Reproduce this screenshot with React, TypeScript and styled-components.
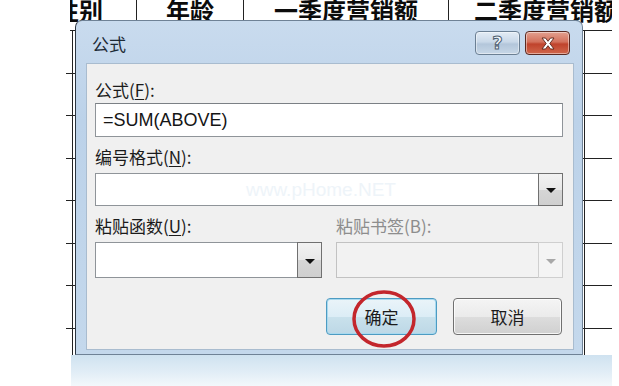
import React from 'react';
import styled, { createGlobalStyle } from 'styled-components';

const GlobalStyle = createGlobalStyle`
  html, body { margin: 0; padding: 0; background: #fff; }
  body { font-family: "Noto Sans CJK SC", "Liberation Sans", sans-serif; }
`;

const Page = styled.div`
  position: relative;
  width: 619px;
  height: 386px;
  overflow: hidden;
  background: #fff;
  display: flex;
  flex-direction: column;
`;

/* ---- the word table behind the dialog ---- */

const Sheet = styled.div`
  height: 355px;
  margin-left: 66px;
  margin-right: 7px;
  overflow: hidden;
`;

const HeadRow = styled.div`
  display: grid;
  grid-template-columns: 66px 107px 205px 1fr;
  margin-left: 4px;
  height: 31px;
  border-bottom: 1.5px solid #222;
  box-sizing: border-box;
`;

const HeadCell = styled.div<{ $first?: boolean }>`
  overflow: hidden;
  white-space: nowrap;
  font-family: "Noto Sans CJK SC", sans-serif;
  font-weight: 700;
  font-size: 24px;
  line-height: 24px;
  margin-top: -2px;
  color: #0c0c0c;
  text-align: ${p => (p.$first ? 'left' : 'center')};
  text-indent: ${p => (p.$first ? '-15px' : '0')};
  border-left: ${p => (p.$first ? 'none' : '1.5px solid #222')};
`;

const WideCell = styled(HeadCell)`
  overflow: visible;
  width: 300px;
  text-align: left;
  padding-left: 25px;
`;

const BodyRow = styled.div`
  display: grid;
  grid-template-columns: 7px 512px 1fr;
  height: 42.5px;
  border-bottom: 1.5px solid #222;
  box-sizing: border-box;
`;

const BodyCell = styled.div<{ $line?: boolean }>`
  border-right: ${p => (p.$line ? '1.5px solid #222' : 'none')};
`;

const Reflection = styled.div`
  height: 31px;
  margin-left: 71px;
  width: 541px;
  background: linear-gradient(to bottom, #cfe2f0 0%, #e1edf6 55%, #f3f8fb 100%);
`;

/* ---- the dialog ---- */

const Dialog = styled.div`
  position: absolute;
  left: 75px;
  top: 20px;
  width: 508px;
  height: 335px;
  box-sizing: border-box;
  border: 1px solid #6f8296;
  border-left-color: #2b3540;
  border-radius: 7px 7px 0 0;
  background: linear-gradient(to bottom, #c9dbee 0%, #bcd2e9 30%, #c4d8ec 100%);
  display: flex;
  flex-direction: column;
  padding: 0 8px 4px 10px;
`;

const TitleBar = styled.div`
  height: 42px;
  display: flex;
  align-items: center;
  justify-content: space-between;
  padding-left: 6px;
`;

const Title = styled.span`
  font-size: 17px;
  color: #1d2a36;
  margin-top: 2px;
`;

const CaptionButtons = styled.div`
  display: flex;
  gap: 5px;
  margin-top: 2px;
  margin-right: 4px;
`;

const CaptionButton = styled.div<{ $close?: boolean }>`
  width: 45px;
  height: 24px;
  box-sizing: border-box;
  border-radius: 4px;
  border: 1px solid ${p => (p.$close ? '#5a2a22' : '#6b7f93')};
  background: ${p =>
    p.$close
      ? 'linear-gradient(to bottom, #e2a08f 0%, #d3715c 45%, #c0432c 55%, #d0674c 100%)'
      : 'linear-gradient(to bottom, #e3ecf5 0%, #c9d8e8 45%, #b3c6da 55%, #c7d7e7 100%)'};
  box-shadow: inset 0 0 0 1px rgba(255, 255, 255, 0.45);
  display: flex;
  align-items: center;
  justify-content: center;
`;

const HelpGlyph = styled.span`
  font-family: "DejaVu Sans", sans-serif;
  font-weight: 700;
  font-size: 18px;
  line-height: 1;
  color: #f4f6f8;
  -webkit-text-stroke: 1px #4d5f71;
`;

const Panel = styled.div`
  flex: 1;
  background: #f0f0f0;
  border: 1px solid #a9bccf;
  display: flex;
  flex-direction: column;
  padding: 16px 10px 0 8px;
`;

const Label = styled.div<{ $disabled?: boolean }>`
  font-size: 17px;
  line-height: 20px;
  color: ${p => (p.$disabled ? '#8d8d8d' : '#1b1b1b')};
  white-space: nowrap;
`;

const Key = styled.span`
  text-decoration: underline;
  text-underline-offset: 2px;
`;

const TextBox = styled.div`
  margin-top: 3px;
  height: 34px;
  box-sizing: border-box;
  border: 1px solid #8f9499;
  border-top-color: #7b8085;
  background: #fff;
  display: flex;
  align-items: center;
  padding-left: 7px;
  font-family: "Liberation Sans", sans-serif;
  font-size: 18px;
  color: #151515;
`;

const Combo = styled.div<{ $h: number; $disabled?: boolean }>`
  height: ${p => p.$h}px;
  box-sizing: border-box;
  border: 1px solid ${p => (p.$disabled ? '#c2c2c2' : '#8f9499')};
  background: ${p => (p.$disabled ? '#f2f2f2' : '#fff')};
  display: flex;
  position: relative;
`;

const ComboText = styled.div`
  flex: 1;
  display: flex;
  align-items: center;
  padding-left: 150px;
  font-family: "Liberation Sans", sans-serif;
  font-size: 19px;
  color: #eef4f9;
  white-space: nowrap;
  overflow: hidden;
`;

const DropButton = styled.div<{ $disabled?: boolean }>`
  width: 25px;
  box-sizing: border-box;
  border: 1px solid ${p => (p.$disabled ? '#cfcfcf' : '#707070')};
  margin: -1px -1px -1px 0;
  background: ${p =>
    p.$disabled
      ? '#f4f4f4'
      : 'linear-gradient(to bottom, #f2f2f2 0%, #e8e8e8 50%, #d6d6d6 51%, #cfcfcf 100%)'};
  display: flex;
  align-items: center;
  justify-content: center;
`;

const Arrow = styled.div<{ $disabled?: boolean }>`
  width: 0;
  height: 0;
  border-left: 5px solid transparent;
  border-right: 5px solid transparent;
  border-top: 5px solid ${p => (p.$disabled ? '#a8a8a8' : '#111')};
  margin-top: 2px;
`;

const Section = styled.div<{ $top: number }>`
  margin-top: ${p => p.$top}px;
`;

const Pair = styled.div<{ $top: number }>`
  margin-top: ${p => p.$top}px;
  display: grid;
  grid-template-columns: 227px 227px;
  column-gap: 14px;
`;

const Buttons = styled.div`
  margin-top: 20px;
  display: flex;
  justify-content: flex-end;
  gap: 16px;
  padding-right: 1px;
`;

const PushButton = styled.div<{ $default?: boolean; $w: number }>`
  position: relative;
  width: ${p => p.$w}px;
  height: 37px;
  box-sizing: border-box;
  border-radius: 4px;
  border: 1px solid ${p => (p.$default ? '#4d9bc2' : '#707070')};
  background: ${p =>
    p.$default
      ? 'linear-gradient(to bottom, #eaf4f9 0%, #dcedf6 50%, #c9e1ec 51%, #bdd8e6 100%)'
      : 'linear-gradient(to bottom, #f4f4f4 0%, #ebebeb 50%, #dddddd 51%, #d0d0d0 100%)'};
  box-shadow: inset 0 0 0 1px ${p => (p.$default ? '#a8d9ef' : 'rgba(255,255,255,0.8)')};
  display: flex;
  align-items: center;
  justify-content: center;
  font-size: 17px;
  color: #1b1b1b;
`;

const Mark = styled.svg`
  position: absolute;
  left: 20px;
  top: -11px;
  width: 74px;
  height: 62px;
  overflow: visible;
  pointer-events: none;
`;

const rowKeys = [0, 1, 2, 3, 4, 5, 6, 7];

export default function App() {
  return (
    <>
      <GlobalStyle />
      <Page>
        <Sheet>
          <HeadRow>
            <HeadCell $first>性别</HeadCell>
            <HeadCell>年龄</HeadCell>
            <HeadCell>一季度营销额</HeadCell>
            <WideCell>二季度营销额</WideCell>
          </HeadRow>
          {rowKeys.map(k => (
            <BodyRow key={k}>
              <BodyCell $line />
              <BodyCell $line />
              <BodyCell />
            </BodyRow>
          ))}
        </Sheet>
        <Reflection />

        <Dialog>
          <TitleBar>
            <Title>公式</Title>
            <CaptionButtons>
              <CaptionButton>
                <HelpGlyph>?</HelpGlyph>
              </CaptionButton>
              <CaptionButton $close>
                <svg width="16" height="13" viewBox="0 0 16 13">
                  <path
                    d="M2 1h3.5L8 4.3 10.5 1H14l-4.2 5.5L14 12h-3.5L8 8.7 5.5 12H2l4.2-5.5z"
                    fill="#fff"
                    stroke="#5a2418"
                    strokeWidth="0.9"
                    strokeLinejoin="round"
                  />
                </svg>
              </CaptionButton>
            </CaptionButtons>
          </TitleBar>

          <Panel>
            <Label>
              公式(<Key>F</Key>):
            </Label>
            <TextBox>=SUM(ABOVE)</TextBox>

            <Section $top={10}>
              <Label>
                编号格式(<Key>N</Key>):
              </Label>
            </Section>
            <Section $top={6}>
              <Combo $h={33}>
                <ComboText>www.pHome.NET</ComboText>
                <DropButton>
                  <Arrow />
                </DropButton>
              </Combo>
            </Section>

            <Pair $top={10}>
              <Label>
                粘贴函数(<Key>U</Key>):
              </Label>
              <Label $disabled>粘贴书签(B):</Label>
            </Pair>
            <Pair $top={6}>
              <Combo $h={36}>
                <ComboText />
                <DropButton>
                  <Arrow />
                </DropButton>
              </Combo>
              <Combo $h={36} $disabled>
                <ComboText />
                <DropButton $disabled>
                  <Arrow $disabled />
                </DropButton>
              </Combo>
            </Pair>

            <Buttons>
              <PushButton $default $w={111}>
                确定
                <Mark viewBox="0 0 74 62">
                  <ellipse cx="37" cy="31" rx="30" ry="27" fill="none" stroke="#c3262c" strokeWidth="3.5" />
                </Mark>
              </PushButton>
              <PushButton $w={109}>取消</PushButton>
            </Buttons>
          </Panel>
        </Dialog>
      </Page>
    </>
  );
}
